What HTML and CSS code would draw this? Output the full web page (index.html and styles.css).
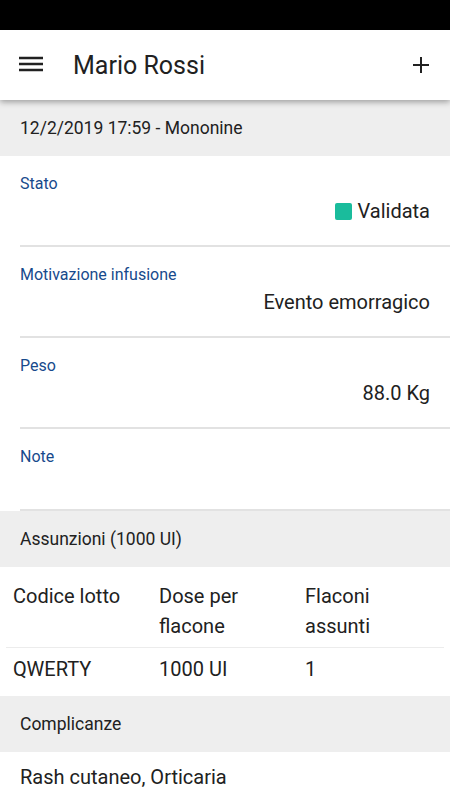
FILE: index.html
```html
<!DOCTYPE html>
<html lang="it">
<head>
  <meta charset="UTF-8" />
  <meta name="viewport" content="width=device-width, initial-scale=1.0"/>
  <title>Mario Rossi</title>
  <link rel="stylesheet" href="styles.css">
</head>
<body>
  <div class="status-bar"></div>

  <header class="app-bar">
    <button class="icon-btn" aria-label="Menu">
      <svg width="24" height="24" viewBox="0 0 24 24">
        <path d="M0 5h24M0 11h24M0 17h24" stroke="#212121" stroke-width="2.4" fill="none"/>
      </svg>
    </button>
    <h1 class="title">Mario Rossi</h1>
    <button class="icon-btn add" aria-label="Aggiungi">
      <svg width="18" height="18" viewBox="0 0 18 18">
        <path d="M9 1v16M1 9h16" stroke="#212121" stroke-width="2" fill="none"/>
      </svg>
    </button>
  </header>

  <main>
    <div class="section-head">12/2/2019 17:59 - Mononine</div>

    <div class="field">
      <div class="field-label">Stato</div>
      <div class="field-value"><span class="status-dot"></span>Validata</div>
    </div>
    <div class="field">
      <div class="field-label">Motivazione infusione</div>
      <div class="field-value">Evento emorragico</div>
    </div>
    <div class="field">
      <div class="field-label">Peso</div>
      <div class="field-value">88.0 Kg</div>
    </div>
    <div class="field empty">
      <div class="field-label">Note</div>
    </div>

    <div class="section-head">Assunzioni (1000 UI)</div>

    <div class="intake-table">
      <div class="row head">
        <div class="cell">Codice lotto</div>
        <div class="cell">Dose per<br>flacone</div>
        <div class="cell">Flaconi<br>assunti</div>
      </div>
      <div class="row">
        <div class="cell">QWERTY</div>
        <div class="cell">1000 UI</div>
        <div class="cell">1</div>
      </div>
    </div>

    <div class="section-head">Complicanze</div>
    <div class="plain-text">Rash cutaneo, Orticaria</div>
  </main>
</body>
</html>
```

FILE: styles.css
```css
body {
  margin: 0;
  font-family: Roboto, "Noto Sans", sans-serif;
  color: #212121;
  background: #fff;
  overflow: hidden;
}

.status-bar {
  height: 30px;
  background: #000;
}

.app-bar {
  position: relative;
  z-index: 1;
  display: flex;
  align-items: center;
  height: 70px;
  padding: 0 20px 0 19px;
  background: #fff;
  box-shadow: 0 2px 6px rgba(0, 0, 0, 0.35);
}

.icon-btn {
  display: flex;
  align-items: center;
  justify-content: center;
  padding: 0;
  border: none;
  background: none;
  cursor: pointer;
}

.title {
  flex: 1;
  margin: 0 0 0 30px;
  font-size: 25px;
  font-weight: 400;
  color: #212121;
}

.section-head {
  height: 56px;
  line-height: 56px;
  padding-left: 20px;
  background: #eeeeee;
  font-size: 17.5px;
  color: #212121;
}

.field {
  margin-left: 20px;
  padding: 18px 20px 22px 0;
  border-bottom: 2px solid #e2e2e2;
}

.field.empty {
  padding-bottom: 42px;
}

.field-label {
  font-size: 16px;
  line-height: 20px;
  color: #174a8c;
}

.field-value {
  display: flex;
  align-items: center;
  justify-content: flex-end;
  margin-top: 5px;
  font-size: 20px;
  line-height: 24px;
}

.status-dot {
  width: 17px;
  height: 17px;
  margin-right: 6px;
  border-radius: 2px;
  background: #1abc9c;
}

.intake-table {
  margin: 0 6px;
  padding: 14px 0 12px;
  font-size: 20px;
  line-height: 30px;
}

.row {
  display: grid;
  grid-template-columns: repeat(3, 1fr);
}

.row.head {
  padding-bottom: 6px;
  margin-bottom: 6px;
  border-bottom: 1px solid #ececec;
}

.cell {
  padding: 0 7px;
}

.plain-text {
  padding: 13px 20px;
  font-size: 20px;
  line-height: 24px;
}
```
